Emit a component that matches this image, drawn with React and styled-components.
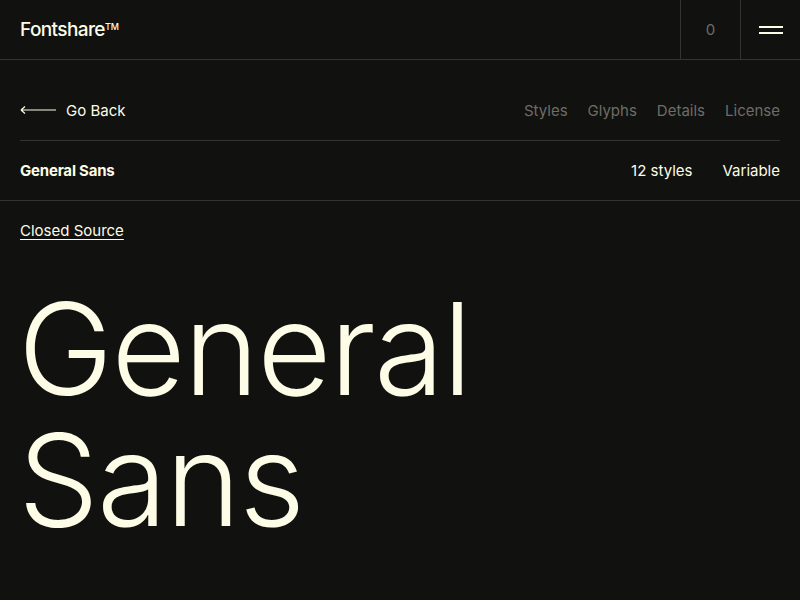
import React from 'react';
import styled, { createGlobalStyle } from 'styled-components';

const cream = '#fdfce6';
const muted = '#6e6d64';
const line = '#34342f';

const GlobalStyle = createGlobalStyle`
  html, body {
    margin: 0;
    padding: 0;
    background: #111110;
    color: ${cream};
    font-family: Inter, "Noto Sans", sans-serif;
  }
  * { box-sizing: border-box; }
`;

const Page = styled.div`
  width: 800px;
  height: 600px;
  overflow: hidden;
  background: #111110;
`;

const Header = styled.header`
  display: flex;
  height: 60px;
  border-bottom: 1px solid ${line};
`;

const Logo = styled.div`
  flex: 1;
  display: flex;
  align-items: center;
  padding-left: 20px;
  font-size: 19px;
  font-weight: 500;
  letter-spacing: -0.6px;
  sup {
    font-size: 9px;
    letter-spacing: 0;
    position: relative;
    top: -3px;
  }
`;

const HeaderCell = styled.div`
  width: 60px;
  display: flex;
  align-items: center;
  justify-content: center;
  border-left: 1px solid ${line};
  color: ${muted};
  font-size: 15px;
`;

const Burger = styled.div`
  display: flex;
  flex-direction: column;
  gap: 4px;
  span {
    display: block;
    width: 24px;
    height: 2px;
    background: ${cream};
  }
`;

const NavRow = styled.div`
  margin: 0 20px;
  height: 81px;
  display: flex;
  align-items: center;
  justify-content: space-between;
  border-bottom: 1px solid ${line};
  padding-top: 20px;
`;

const Back = styled.div`
  display: flex;
  align-items: center;
  gap: 10px;
  font-size: 15px;
`;

const Tabs = styled.nav`
  display: flex;
  gap: 20px;
  font-size: 15px;
  color: ${muted};
`;

const InfoRow = styled.div`
  height: 60px;
  padding: 0 20px;
  display: flex;
  align-items: center;
  justify-content: space-between;
  border-bottom: 1px solid ${line};
  font-size: 15px;
`;

const Name = styled.div`
  font-weight: 700;
  letter-spacing: -0.2px;
`;

const Meta = styled.div`
  display: flex;
  gap: 30px;
`;

const License = styled.div`
  padding: 20px 20px 0;
  font-size: 15px;
  a {
    color: ${cream};
    text-decoration: underline;
    text-underline-offset: 3px;
  }
`;

const Display = styled.h1`
  margin: 43px 0 0 18px;
  font-size: 128px;
  font-weight: 300;
  line-height: 131px;
  letter-spacing: -1.8px;
`;

export default function App() {
  return (
    <Page>
      <GlobalStyle />
      <Header>
        <Logo>Fontshare<sup>TM</sup></Logo>
        <HeaderCell>0</HeaderCell>
        <HeaderCell>
          <Burger><span /><span /></Burger>
        </HeaderCell>
      </Header>
      <NavRow>
        <Back>
          <svg width="36" height="10" viewBox="0 0 36 10">
            <path d="M1 5H36M1 5L5 1.5M1 5L5 8.5" stroke={cream} strokeWidth="1.2" fill="none" />
          </svg>
          Go Back
        </Back>
        <Tabs>
          <span>Styles</span>
          <span>Glyphs</span>
          <span>Details</span>
          <span>License</span>
        </Tabs>
      </NavRow>
      <InfoRow>
        <Name>General Sans</Name>
        <Meta>
          <span>12 styles</span>
          <span>Variable</span>
        </Meta>
      </InfoRow>
      <License><a href="#">Closed Source</a></License>
      <Display>General<br />Sans</Display>
    </Page>
  );
}
